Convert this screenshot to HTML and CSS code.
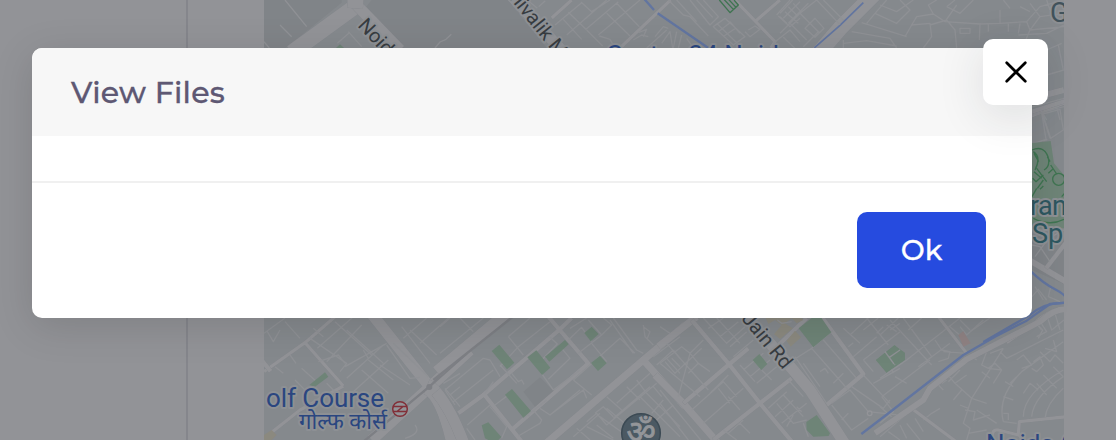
FILE: index.html
```html
<!DOCTYPE html>
<html lang="en">
<head>
<meta charset="utf-8">
<title>View Files</title>
<link rel="stylesheet" href="styles.css">
</head>
<body>
<div class="page">
  <div class="sidebar"></div>
  <main class="content">
    <svg class="map" width="800" height="440" viewBox="264 0 800 440" aria-label="Map">
      <rect class="land" x="264" width="800" height="440"/>
      <!-- north-west -->
      <g transform="translate(260 0) scale(.33333)">
        <path class="block" d="M12 0H245V8L77 144H12zM335 0H745L860 144H430L315 25z"/>
        <path class="major w45" d="M95 158L285 20V-10"/>
        <path class="major w38" d="M285 10L420 150"/>
        <path class="major w45" d="M285 25L288 -10"/>
        <path class="minor" d="M75 0L140 80M60 75L95 110M12 125L28 144M265 95L305 140M268 98L232 130M525 144L540 126 558 118 574 103"/>
        <path class="park" d="M228 144L240 133 252 144z"/>
      </g>
      <!-- north -->
      <g transform="translate(500 0) scale(.33333)">
        <path class="major w38" d="M35 -12L190 156"/>
        <path class="major w10" d="M155 54L215 0M360 144L512 0M700 -5L825 125 812 144M768 62L840 0"/>
        <path class="minor" d="M82 0L112 25M116 20L136 2M165 75L245 8M200 105L320 0M243 6L275 35 330 0M205 37L258 88 355 5M260 90L308 138M190 58L245 118M295 105L420 0M345 144L330 118 298 108M320 40L390 108M350 10L418 80M415 98L440 88 430 110M400 120L425 105 445 110M465 110L490 80 505 85M440 144L500 90M485 130L510 95 518 144M530 95L520 144M545 105L535 144M560 115L580 144M505 0L550 45 570 50 625 108M530 0L590 65M570 0L630 75 655 50 610 0M590 0L638 52M640 80L675 55 735 110 700 135zM655 95L690 68M672 108L708 84M650 70L710 128M690 65L720 100M745 90L765 78 780 88 750 110 735 95M820 130L870 90 900 125M850 112L890 150M830 45L870 0M835 48L870 80 900 55M855 35L895 70M880 10L900 32"/>
        <path class="water" d="M432 -4L462 30M473 40L625 144"/>
        <path class="parkline" d="M658 0L690 38 715 15 702 0M668 -6L700 28M680 -8L708 22"/>
      </g>
      <!-- north-east -->
      <g transform="translate(780 0) scale(.33333)">
        <path class="major w45" d="M285 -20L180 85 115 160"/>
        <path class="water thin" d="M250 8L180 76 103 144"/>
        <path class="minor" d="M0 100L60 40 115 95 70 140M30 70L80 120M60 40L110 0 180 74M75 85L105 55 132 85 105 112zM90 70L120 100M0 40L38 0M10 55L60 5M25 70L85 10M0 50L20 70M25 20L50 45M130 0L190 60M190 130L260 122 350 138M190 120V144M215 95L330 115 350 144M245 68L380 110M260 70L285 40 350 70 390 30 360 0M285 40L320 0M300 15L350 35 400 0M375 110L395 75 450 70 455 110 430 144M395 75L410 50 460 42 495 65 600 72M450 75L500 60 525 90 530 144M460 42L445 15 470 0M500 20L525 0M500 20L540 40 580 0M495 65L530 15M540 85H570V100H540zM600 72L660 70 740 65 780 20 852 0M600 72L598 120M660 70V30M740 65L750 90 852 80M625 70V95M685 70V95M720 70L715 100M750 90L735 125M750 90L780 50 750 10M780 50L852 40M800 0L810 30M720 20L750 35M715 105L800 100 852 75M800 150L845 130M835 135L850 210M800 225L852 210M670 0L690 25"/>
        <path class="major w18" d="M700 310L852 270M700 365L852 305"/>
        <path class="minor" d="M780 325L852 300M756 345L852 320M785 335L800 360M830 320L840 360"/>
      </g>
      <!-- east -->
      <g transform="translate(960 100) scale(.33333)">
        <path class="major w14" d="M200 40L325 0"/>
        <path class="minor" d="M200 25L312 -5M220 45L245 38 258 118 216 132M248 42L300 28 310 90 272 115zM245 38L270 115M250 123L262 118"/>
        <path class="park" d="M210 130L272 123 282 190 320 235V385H210z"/>
        <path class="parkline" d="M216 150Q250 135 264 170 272 200 252 210M220 155Q245 170 225 210M222 160L236 185M222 215L245 235M230 205L260 245M240 268L250 258M218 235L228 245 250 225M232 265L250 240M216 290L230 265M272 195L290 222M262 170L270 185M278 208L265 220M305 290L314 280M220 355Q270 380 312 358"/>
        <circle class="parkline" cx="296" cy="238" r="18"/>
        <path class="block" d="M205 390H330V560L205 505z"/>
        <path class="major w18" d="M204 478L330 552"/>
        <path class="major w14" d="M258 505L330 412"/>
        <path class="minor" d="M216 435L240 440 270 485M225 470L265 415 312 390M216 590L235 568 260 600M225 560L250 600M272 560L265 590 300 605"/>
        <path class="water" d="M210 512Q250 550 285 568T320 600M70 726L210 645Q255 605 320 609"/>
        <path class="major w10" d="M140 728L225 668Q280 620 320 626"/>
        <path class="minor" d="M0 680L20 705 70 660M225 665L248 690 235 715M260 645L275 690 312 660M240 655L265 640M285 640L300 690"/>
      </g>
      <!-- south-west -->
      <g transform="translate(180 300) scale(.33333)">
        <path class="major w10" d="M252 215L375 128 465 50M375 128L490 258M252 415L360 330 490 258"/>
        <path class="major w14" d="M245 180L272 214"/>
        <path class="major w38" d="M570 35L745 255M575 420L745 265 870 150"/>
        <path class="major w45" d="M740 260Q790 280 825 440"/>
        <path class="dark" d="M520 450L748 260 860 160"/>
        <path class="minor" d="M262 95L280 125 300 90M315 65L360 115M400 85L430 110M412 145L520 50M440 185L545 75M500 90L610 190M465 65L575 165M390 115L500 190 480 215M415 185L475 165 495 190M495 200L620 130M550 150L565 175M545 210L625 280M565 180L640 240M500 235L610 135M600 195L690 255M520 275L625 180M285 200L310 220M330 165L348 190M345 240L380 275M365 205L415 250M440 250L465 275M620 135L690 235 720 232M640 130L745 230M690 90L770 165M665 80L750 190M670 115L740 54M720 130L810 50M790 250L840 220M795 265L840 320M810 285L840 260M675 415Q725 400 705 375M252 100L315 54"/>
        <path class="park" d="M388 255L435 217 445 230 405 260z"/>
        <path class="sand" d="M252 405L275 390 290 405 275 420H252z"/>
        <circle class="junction" cx="748" cy="261" r="9"/>
      </g>
      <!-- south -->
      <g transform="translate(440 300) scale(.33333)">
        <path class="major w38" d="M-10 215L210 30M-12 275Q35 330 75 440"/>
        <path class="dark" d="M-20 240L225 45"/>
        <path class="major w14" d="M55 340L130 285 355 92 395 54M325 50L445 190 220 385M130 280L245 425"/>
        <path class="major w22" d="M318 430L610 180 735 75M608 178L735 320"/>
        <path class="block" d="M250 275L300 232 340 272 285 320z"/>
        <path class="minor" d="M330 65L235 140M205 110L270 54M205 110L250 165M235 140L180 200M330 112L352 132 305 180M318 175L365 145 390 175 325 238M290 200L340 270M390 85L440 54M445 60L485 105 515 75 490 54M485 105L415 160M400 240L455 285M385 120L425 82 455 125M455 130L500 185M400 240L540 115 585 160M15 270L130 175 150 180 180 230M40 305L160 210M15 270L45 315M180 195L230 250M215 220L235 245 245 240 252 253M135 280L160 245M165 315L205 285M150 315L82 375M150 320L180 355 200 380 185 415M80 385L105 420M200 280L270 350M250 355L320 300M300 325L330 345 420 270M330 345L430 270 440 295M280 330L305 360 300 370 235 408M340 270L420 210M520 54L590 150 610 160M610 75L615 110 640 135M610 80L630 95 622 115M700 150L720 175M640 170L720 110M660 190L720 240M650 195L700 150M680 175L720 220M0 160L130 54M30 54L0 80M60 54L100 95M510 60L580 160M465 340L490 320 520 350M440 365L470 340 500 375M410 385L450 420M480 350L550 400M500 325L560 375M520 355L630 260M500 375L650 250M530 310L630 220M560 260L600 300M590 240L620 280M620 280L720 380M600 290L720 410M640 260L665 290M670 300L635 340M700 315L650 360M500 290L545 330M440 380L520 420M470 375L520 415M400 410L480 340"/>
        <path class="park" d="M155 153L178 134 223 188 201 208zM262 172L289 151 331 203 306 225zM315 170L375 120 386 133 328 185zM433 99L455 80 476 102 452 124zM453 189L480 167 500 190 474 213zM195 284L216 267 273 333 250 353zM125 376L145 367 184 411 165 430 135 415z"/>
      </g>
      <!-- south-east of the centre -->
      <g transform="translate(660 300) scale(.33333)">
        <path class="major w22" d="M-5 140L110 50M-15 225L70 310 175 430"/>
        <path class="major w14" d="M95 60L205 190 300 310 400 430M70 310L205 195 265 145M160 420L395 235M330 160L440 54M485 50L610 222 500 315"/>
        <path class="major w38" d="M250 40L370 175 450 270 560 440"/>
        <path class="minor" d="M0 190L65 140 90 160 55 290M15 185L45 220 125 145M35 175L60 200M20 130L145 270M90 160L115 190 85 220M115 190L150 215M90 160L130 120M60 240L120 290M95 330L190 245 230 290M130 370L250 265M175 265L210 310M205 290L240 330M205 225L150 280M130 54L200 130 255 80M170 54L240 130M145 85L190 54M180 110L235 65M210 140L260 95M220 170L280 120M250 210L310 160M270 230L330 180M290 250L350 200M305 210L335 240M240 195L285 245M325 325L380 275M345 350L400 300M365 370L440 310M350 310L400 370 440 360M370 285L430 350M410 320L425 335M400 345L380 380M430 370L445 410M385 240L430 290M400 180L455 145 565 270M455 145L520 90M490 120L590 235M405 170L500 310M430 190L480 260M480 215L495 205 505 220M520 250L550 220M515 310L570 270 625 335 715 345M515 315L575 390 625 355M545 360L565 340M575 260L670 325 690 300M610 180L720 95M580 170L650 110M565 140L580 128M550 85L600 130M570 105L625 54M610 90L655 54M620 54L685 135M650 100L670 80M680 75L710 95M690 90L720 70M640 250L720 205M610 225L690 310M690 190L700 220M610 180L640 215M205 400L250 360M190 390L230 420M240 370L270 400M0 270L130 430M0 310L85 420M0 80L30 100"/>
        <circle class="road-ring" cx="629" cy="340" r="7"/>
        <path class="park" d="M416 85L460 50H482L514 97 460 142zM278 180L298 162 322 192 304 210zM439 366L470 345 510 400 506 408 460 410 440 390zM648 180L703 136 735 158V180L680 218z"/>
        <path class="sand" d="M317 54H425L430 60 410 70 395 55 375 70 398 85 360 117 342 103 365 75 345 60 325 72zM380 122L405 92 423 112 392 140z"/>
        <path class="minor" d="M352 60L365 70 395 65M675 155L705 195M685 175L720 150"/>
      </g>
      <!-- south-east corner -->
      <g transform="translate(880 300) scale(.33333)">
        <path class="park" d="M-12 180L44 136 72 162 20 218z"/>
        <path class="minor" d="M0 105L55 54M0 235L80 180 240 54M30 60L155 195M70 54L155 170M85 90L125 54M15 155L42 192M28 172L60 150M45 230L80 250M165 120L185 150 210 155 205 175 175 185M5 290L150 180M5 290L40 335 0 370M0 320L35 350M115 200L210 130M210 80L245 110M240 60L270 90M270 95L330 54M190 155L260 160M200 220L225 250 275 295 370 145M225 250L260 225M320 155L305 195 325 205M275 295L320 310M305 215L330 235M325 205L365 210 340 250M325 205L345 190 365 210M270 165L290 180M330 160L370 145M370 365Q350 290 425 215L550 125M375 245L400 260M370 290L400 300M370 365L410 370M370 340H385V360M390 250L410 230M410 180L430 165 455 195 425 205M360 155L380 175 480 125 550 90M460 185L480 170 490 195 470 215 455 205M480 155L510 185 525 165 550 190M495 145L530 155 520 120M430 350Q430 280 550 210M455 350Q460 290 550 230M495 355Q500 310 550 265M470 250L500 285M490 225L530 265M520 200L550 230M430 280L450 250 475 270M275 295L250 370 270 385 260 420M255 330L285 335 280 360 330 345M240 315L265 325M170 250L190 270M185 250L200 240M220 300L245 270M205 245L240 210M60 375L80 415M0 410L70 350M80 370L120 420M105 355L130 395M130 360L155 340 180 325M25 395L60 420M290 330L350 370M265 400L320 390M450 80L480 65 500 95 470 110M465 65L485 90"/>
        <path class="major w10" d="M175 50L260 160M95 325L235 430"/>
        <path class="major w18" d="M-15 400L130 300 150 265 260 178 480 65Q525 25 560 28"/>
        <path class="water" d="M-56 402L38 330 250 165 345 110 440 62 510 12 560 8"/>
        <path class="major w10" d="M340 430Q330 385 355 390L415 405 418 365 560 350M415 400L440 440"/>
        <path class="rose" d="M235 105L250 94 272 130 250 140z"/>
      </g>
      <!-- place labels -->
      <g class="road-label">
        <text transform="translate(357 26) rotate(47)">Noida</text>
        <text transform="translate(509 -2) rotate(51)">hivalik Marg</text>
        <text transform="translate(741 319) rotate(50.5)">Jain Rd</text>
      </g>
      <g class="city-label">
        <text x="607" y="64" textLength="186">Sector 34 Noida</text>
        <text x="266" y="407" textLength="118">olf Course</text>
        <text class="hindi" x="299" y="429" textLength="88" lengthAdjust="spacingAndGlyphs">गोल्फ कोर्स</text>
        <text x="986" y="453">Noida G</text>
      </g>
      <g class="poi-label">
        <text x="1030" y="215" textLength="37">ran</text>
        <text x="1032" y="243">Sp</text>
        <text class="poi-gray" x="1050" y="22">G</text>
      </g>
      <g class="metro"><circle cx="400" cy="409" r="7.3"/><path d="M393 406.5H407M393 411.5H407M403 406.5L397 411.5"/></g>
      <circle class="temple" cx="641" cy="433" r="19.3"/>
      <text class="om" x="641" y="443">ॐ</text>
    </svg>
  </main>
</div>
<section class="modal" role="dialog" aria-labelledby="modal-title">
  <header class="modal-header">
    <h1 class="modal-title" id="modal-title">View Files</h1>
  </header>
  <div class="modal-body"></div>
  <footer class="modal-footer"><button class="ok">Ok</button></footer>
  <button class="close" aria-label="Close"><svg width="24" height="24" viewBox="0 0 24 24"><path d="M2.7 2.7L21.3 21.3M21.3 2.7L2.7 21.3"/></svg></button>
</section>
</body>
</html>
```
FILE: styles.css
```css
* { box-sizing: border-box; }
body { margin: 0; padding: 48px 84px 0 32px; height: 440px; overflow: hidden; background: #929397; font-family: Montserrat, Inter, sans-serif; }
.page { position: absolute; inset: 0; display: flex; overflow: hidden; }
.sidebar { width: 188px; flex: none; border-right: 2px solid #85868c; }
.content { padding-left: 76px; }
.map { display: block; font-family: Roboto, "Noto Sans", sans-serif; }
.map path { stroke-linejoin: round; }
.land { fill: #85898d; }
.block { fill: #808488; }
.major { fill: none; stroke: #929397; filter: drop-shadow(0 0 1px #7b7f84); }
.minor { fill: none; stroke: #8f9195; stroke-width: 4; }
.w10 { stroke-width: 10; }
.w14 { stroke-width: 13; }
.w18 { stroke-width: 18; }
.w22 { stroke-width: 22; }
.w38 { stroke-width: 34; }
.w45 { stroke-width: 47; }
.dark { fill: none; stroke: #7d7f84; stroke-width: 7; }
.water { fill: none; stroke: #6275a0; stroke-width: 7; }
.water.thin { stroke-width: 5; }
.park { fill: #6e8477; }
.parkline { fill: none; stroke: #3f7451; stroke-width: 4; }
.sand { fill: #8b897f; }
.rose { fill: #8f8283; }
.junction { fill: #7d7f84; }
.road-ring { fill: #85898d; stroke: #939498; stroke-width: 4; }
.map text { paint-order: stroke; stroke: #8d9094; stroke-width: 4px; stroke-linejoin: round; }
.road-label { font-size: 20px; fill: #373c41; }
.city-label { font-size: 26px; fill: #2a4680; }
.city-label .hindi { font-size: 22px; }
.poi-label { font-size: 27px; fill: #2d5760; }
.poi-label .poi-gray { fill: #41525b; }
.metro { fill: #929397; stroke: #812f38; stroke-width: 1.5; }
.temple { fill: #4b5963; stroke: #3c4a54; stroke-width: 1.5; }
.map .om { font-size: 32px; text-anchor: middle; fill: #939599; stroke: #939599; stroke-width: .8px; }
.modal { position: relative; height: 270px; border-radius: 10px; background: #fff; box-shadow: 0 8px 40px rgba(0,0,0,.13); }
.modal-header { height: 88px; padding: 2px 39px 0; display: flex; align-items: center; background: #f7f7f7; border-radius: 10px 10px 0 0; }
.modal-title { margin: 0; font-size: 30px; font-weight: 500; line-height: 40px; letter-spacing: .25px; color: #5e5873; -webkit-text-stroke: .3px #5e5873; }
.modal-body { height: 45px; }
.modal-footer { height: 137px; display: flex; justify-content: flex-end; align-items: flex-start; padding: 29px 46px 0 0; border-top: 2px solid #f0f0f0; }
button { border: 0; font-family: inherit; }
.ok { width: 129px; height: 76px; border-radius: 10px; background: #264bdf; color: #fff; font-size: 28.5px; font-weight: 500; padding: 0 0 1px; -webkit-text-stroke: .3px #fff; }
.close { position: absolute; top: -9px; right: -16px; width: 65px; height: 66px; border-radius: 10px; background: #fff; padding: 0; display: grid; place-items: center; box-shadow: 0 10px 48px rgba(34,41,47,.12); }
.close path { stroke: #000; stroke-width: 2.7; stroke-linecap: round; }
```
